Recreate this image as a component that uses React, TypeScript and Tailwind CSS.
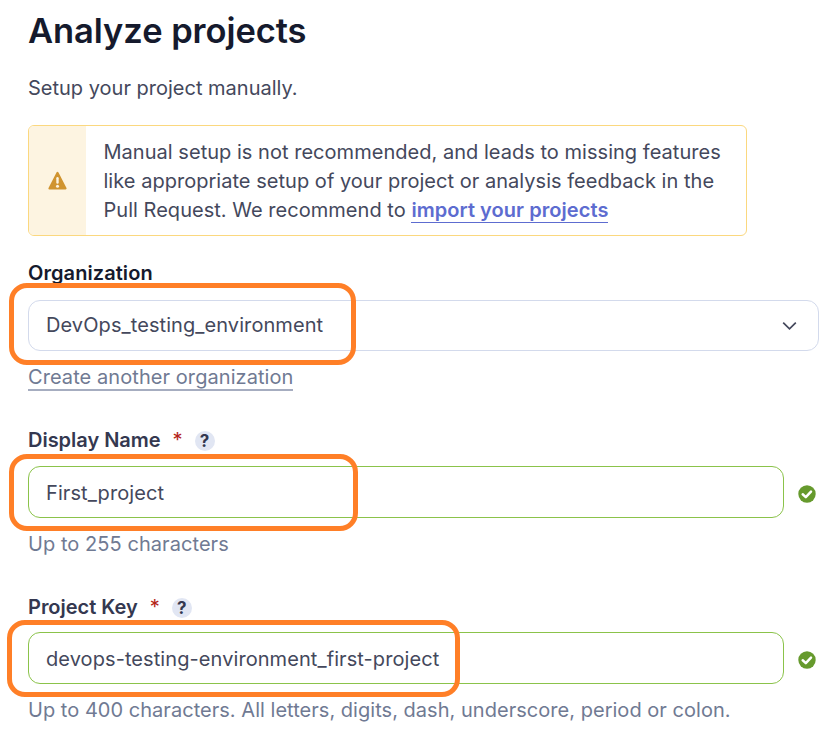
import React from 'react';

function CheckCircle() {
  return (
    <svg className="size-[18px] shrink-0" viewBox="0 0 18 18">
      <circle cx="9" cy="9" r="8.7" fill="#669a2d" />
      <path d="M4.7 9.3 L7.8 12.1 L13 6.6" fill="none" stroke="#fff" strokeWidth="2.5" strokeLinecap="round" strokeLinejoin="round" />
    </svg>
  );
}

function WarningIcon() {
  return (
    <svg className="h-[19px] w-[19px]" viewBox="0 0 19 19">
      <path d="M9.5 1.8 L17.6 17.4 H1.4 Z" fill="#d09430" stroke="#d09430" strokeWidth="2" strokeLinejoin="round" />
      <path d="M9.5 7.2 V11.6" stroke="#fdf4e1" strokeWidth="2.4" strokeLinecap="round" />
      <circle cx="9.5" cy="15.2" r="1.5" fill="#fdf4e1" />
    </svg>
  );
}

function Label({ text }: { text: string }) {
  return (
    <div className="flex h-[29px] items-start font-semibold text-[#343850]">
      <span className="tracking-[-0.02px]">{text}</span>
      <span className="ml-[12px] w-[9px] font-normal text-[#b42318]">*</span>
      <span className="mt-[5px] ml-[13px] flex size-5 items-center justify-center rounded-full bg-[#e1e6f3] text-[17px] leading-5 font-bold text-[#343850]">?</span>
    </div>
  );
}

// Hand-placed highlight drawn around a field
function Highlight({ className }: { className: string }) {
  return <div className={`pointer-events-none absolute rounded-[18px] border-[5px] border-[#ff7f27] ${className}`} />;
}

function Field({ value }: { value: string }) {
  return (
    <div className="flex h-[52px] items-center gap-[14px]">
      <div className="flex h-[52px] w-[756px] items-center rounded-[12px] border border-[#8bc34a] px-[17px] pt-[2px] text-[#44485c]">
        <span className="tracking-[0.08px]">{value}</span>
      </div>
      <div className="pt-[3px]"><CheckCircle /></div>
    </div>
  );
}

export default function App() {
  return (
    <div className="relative h-[734px] w-[836px] overflow-hidden bg-white pt-[9px] pl-[28px] font-['Inter',sans-serif] text-[20px] leading-[28.8px] text-[#44485c]">
      <h1 className="h-[65px] text-[34.5px] leading-[44px] font-semibold tracking-[-0.06px] text-[#151a2d]">Analyze projects</h1>
      <p className="h-[51px]">Setup your project manually.</p>
      <div className="flex h-[111px] w-[719px] overflow-hidden rounded-[6px] border border-[#fbd87f]">
        <div className="flex w-[57px] items-center justify-center bg-[#fdf4e1]"><WarningIcon /></div>
        <div className="flex flex-col pt-[11.6px] pl-[17.5px] leading-[29px] tracking-[0.03px] whitespace-nowrap">
          <div>Manual setup is not recommended, and leads to missing features</div>
          <div>like appropriate setup of your project or analysis feedback in the</div>
          <div>
            <span>Pull Request. We recommend to </span>
            <a className="border-b border-[#5d6cd0] font-semibold tracking-[0.06px] text-[#5d6cd0]">import your projects</a>
          </div>
        </div>
      </div>
      <div className="mt-[23px] h-[41px] font-semibold tracking-[0.07px] text-[#151a2d]">Organization</div>
      <div className="flex h-[51px] w-[791px] items-center justify-between rounded-[12px] border border-[#d3daec] pr-[21px] pl-[17px]">
        <span className="tracking-[0.08px]">DevOps_testing_environment</span>
        <svg className="mt-[1px] h-[10px] w-[15px]" viewBox="0 0 15 10"><path d="M1.2 1.6 L7.5 7.9 L13.8 1.6" fill="none" stroke="#44485c" strokeWidth="1.7" /></svg>
      </div>
      <div className="mt-[12px] h-[63px] tracking-[0.07px] text-[#707a93]"><span className="border-b-2 border-[#a6adc0] leading-none">Create another organization</span></div>
      <Label text="Display Name" />
      <div className="mt-[11px]"><Field value="First_project" /></div>
      <div className="mt-[12px] h-[63px] tracking-[0.06px] text-[#707a93]">Up to 255 characters</div>
      <Label text="Project Key" />
      <div className="mt-[10px]"><Field value="devops-testing-environment_first-project" /></div>
      <div className="mt-[12px] tracking-[0.03px] whitespace-nowrap text-[#707a93]">Up to 400 characters. All letters, digits, dash, underscore, period or colon.</div>
      <Highlight className="top-[283px] left-[9px] h-[82px] w-[347px]" />
      <Highlight className="top-[454px] left-[9px] h-[77px] w-[349px]" />
      <Highlight className="top-[620px] left-[7px] h-[77px] w-[453px]" />
    </div>
  );
}
